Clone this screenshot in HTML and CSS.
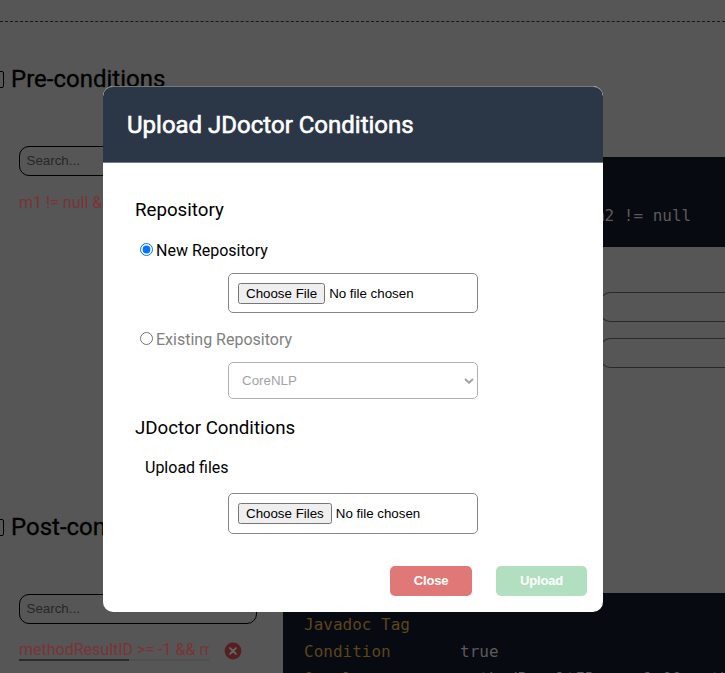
FILE: index.html
```html
<!DOCTYPE html>
<html lang="en">
<head>
<meta charset="utf-8">
<title>Upload JDoctor Conditions</title>
<link rel="stylesheet" href="styles.css">
</head>
<body>
<main class="page">
  <section class="group">
    <h2 class="group-title"><span class="marker"></span>Pre-conditions</h2>
    <div class="columns">
      <aside class="side">
        <input class="search" type="text" placeholder="Search...">
        <div class="item"><span class="item-text">m1 != null &amp;&amp;</span></div>
      </aside>
      <div class="detail">
        <div class="code">
          <span class="key">Javadoc Tag</span><span></span>
          <span class="key">Condition</span><span>m1 != null &amp;&amp; m2 != null</span>
        </div>
        <div class="fields">
          <div class="field"></div>
          <div class="field"></div>
        </div>
      </div>
    </div>
  </section>
  <section class="group">
    <h2 class="group-title"><span class="marker"></span>Post-conditions</h2>
    <div class="columns">
      <aside class="side">
        <input class="search" type="text" placeholder="Search...">
        <div class="item">
          <span class="item-text scroll">methodResultID &gt;= -1 &amp;&amp; methodResultID</span>
          <svg class="remove" viewBox="0 0 18 18"><circle cx="9" cy="9" r="8.4"/><path d="M6.1 6.1l5.8 5.8M11.9 6.1l-5.8 5.8"/></svg>
        </div>
      </aside>
      <div class="detail">
        <div class="code">
          <span class="key">Javadoc Tag</span><span></span>
          <span class="key">Condition</span><span>true</span>
          <span class="key">Oracle</span><span>methodResultID &gt;= -1 &amp;&amp; methodResultID</span>
        </div>
      </div>
    </div>
  </section>
</main>

<div class="modal" role="dialog">
  <header class="modal-header"><h2>Upload JDoctor Conditions</h2></header>
  <form class="modal-body">
    <h3>Repository</h3>
    <label class="choice"><input type="radio" name="repo" checked>New Repository</label>
    <input class="control file" type="file">
    <label class="choice muted"><input type="radio" name="repo">Existing Repository</label>
    <div class="control select">CoreNLP<svg viewBox="0 0 10 6"><path d="M1 1l4 3.7L9 1"/></svg></div>
    <h3 class="second">JDoctor Conditions</h3>
    <p class="label">Upload files</p>
    <input class="control file files" type="file" multiple>
  </form>
  <footer class="modal-footer">
    <button class="btn close">Close</button>
    <button class="btn upload">Upload</button>
  </footer>
</div>
</body>
</html>
```
FILE: styles.css
```css
* { box-sizing: border-box; }
body {
  margin: 0;
  height: 673px;
  overflow: hidden;
  background: #565656;
  color: #000;
  font-family: Roboto, sans-serif;
  font-size: 16px;
}
h2, h3, p { margin: 0; font-weight: 400; }

.page {
  height: 673px;
  padding-top: 21px;
  overflow: hidden;
}
.group { height: 449px; }
.group:first-child { border-top: 1px dashed #161616; }
.group-title {
  display: flex;
  align-items: center;
  height: 28px;
  margin-top: 43px;
  font-size: 24px;
  -webkit-text-stroke: 0.3px #000;
}
.marker {
  width: 12px;
  height: 17px;
  margin: 0 7.5px 0 -8.5px;
  border: 1px solid #000;
  border-radius: 2px;
}
.columns {
  display: flex;
  margin-top: 53px;
}
.side { width: 283px; padding-left: 19px; flex: none; }
.search {
  display: block;
  width: 238px;
  height: 30px;
  padding: 0 7px 2px 6.5px;
  border: 1px solid #000;
  border-radius: 10px;
  background: transparent;
  font: 13.33px "Liberation Sans", sans-serif;
}
.search::placeholder { color: #272727; }
.item {
  display: flex;
  align-items: center;
  height: 24px;
  margin-top: 16px;
  color: #7a3337;
}
.group:last-child .item { margin-top: 14px; }
.item-text {
  flex: none;
  width: 190px;
  height: 24px;
  line-height: 21px;
  overflow: hidden;
  white-space: nowrap;
}
.item-text.scroll {
  line-height: 23px;
  background:
    linear-gradient(#2b2b2b, #2b2b2b) 0 21px / 110px 2px no-repeat,
    linear-gradient(#505050, #505050) 0 21px / 190px 2px no-repeat;
}
.remove { width: 18px; height: 18px; margin: 1px 0 0 15px; }
.remove circle { fill: #562022; }
.remove path { stroke: #646464; stroke-width: 2; stroke-linecap: round; }

.detail { flex: 1; min-width: 0; padding-top: 11px; }
.group:last-child .detail { padding-top: 0; margin-top: -1px; }
.code {
  display: grid;
  grid-template-columns: 156px 1fr;
  grid-auto-rows: 27px;
  padding: 18px 0 18px 21px;
  background: #070a11;
  color: #5b5b5b;
  font: 16px/27px "DejaVu Sans Mono", monospace;
  white-space: nowrap;
}
.key { color: #5d451c; }
.fields {
  display: grid;
  gap: 16px;
  margin: 45px 0 0 317px;
}
.field {
  height: 30px;
  border: 1px solid #292929;
  border-right: 0;
  border-radius: 10px 0 0 10px;
}

.modal {
  position: absolute;
  top: 86px;
  left: 103px;
  width: 500px;
  height: 526px;
  border-radius: 10px;
  background: #fff;
  overflow: hidden;
}
.modal-header {
  height: 77px;
  padding: 23px 24px;
  border-top: 1px solid #74777b;
  border-bottom: 1px solid #747c86;
  border-radius: 10px 10px 0 0;
  background: #2b3747;
  color: #fff;
}
.modal-header h2 {
  font-size: 24px;
  line-height: 30px;
  -webkit-text-stroke: 0.6px #fff;
}
.modal-body {
  display: flex;
  flex-direction: column;
  padding: 34px 32px 0;
}
h3 {
  height: 26px;
  font-size: 18.72px;
  line-height: 26px;
}
.choice {
  display: flex;
  align-items: center;
  height: 20px;
  margin-top: 17px;
}
.choice input { width: 13px; height: 13px; margin: 0 3px 1px 5px; }
.muted { margin-top: 16px; color: #808080; }
.control {
  width: 250px;
  height: 40px;
  margin: 13px 0 0 93px;
  border: 1px solid #868686;
  border-radius: 5px;
  font: 13.33px "Liberation Sans", sans-serif;
}
.file { padding: 9px 9px 8px; color: #000; }
.files { height: 41px; margin-top: 14px; }
.select {
  display: flex;
  align-items: center;
  justify-content: space-between;
  height: 37px;
  padding: 0 3px 0 13px;
  border-color: #b1b1b1;
  color: #a3a3a3;
}
.select svg { width: 10px; height: 6px; }
.select path { fill: none; stroke: #a3a3a3; stroke-width: 2; }
.second { margin-top: 16px; }
.label { height: 22px; margin: 16px 0 0 10px; line-height: 22px; }
.modal-footer {
  display: flex;
  justify-content: flex-end;
  gap: 24px;
  padding: 32px 16px 0 0;
}
.btn {
  width: 82px;
  height: 30px;
  padding: 0 0 2px;
  border: 0;
  border-radius: 5px;
  background: #e17878;
  color: #fff;
  font: bold 13px "Liberation Sans", sans-serif;
  letter-spacing: -0.2px;
}
.upload { width: 91px; background: #b1dfc0; }
```
